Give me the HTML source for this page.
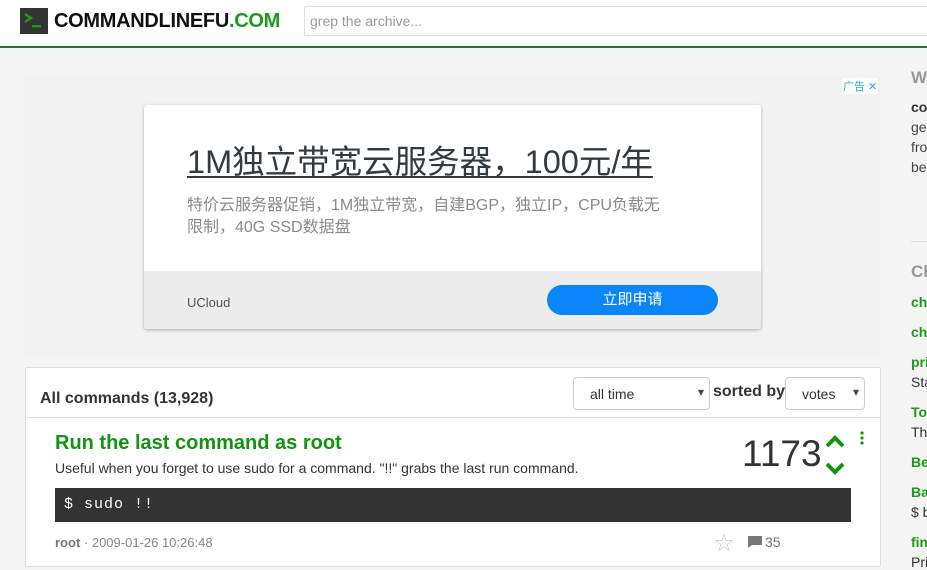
<!DOCTYPE html>
<html><head><meta charset="utf-8">
<style>
*{margin:0;padding:0;box-sizing:border-box}
body{width:927px;height:565px;overflow:hidden;background:#f4f4f4;font-family:"Liberation Sans","Noto Sans CJK SC",sans-serif;position:relative}
.hdr{position:absolute;left:0;top:0;width:927px;height:48px;background:#fff;border-bottom:2px solid #1e7e1e}
.logo{position:absolute;left:20px;top:8px;width:28px;height:26px;background:#333}
.brand{position:absolute;left:54px;top:10px;font-size:20px;font-weight:bold;color:#111;letter-spacing:-0.3px}
.brand span{color:#1c9a1c}
.search{position:absolute;left:304px;top:6px;width:640px;height:30px;border:1px solid #ddd;border-radius:2px;font-size:14px;color:#999;padding:6px 5px}
.ad{position:absolute;left:25px;top:75px;width:855px;height:282px;background:#f2f2f2}
.adtag{position:absolute;left:842px;top:78px;font-size:11px;color:#1eb0e0;background:#fff;padding:0 1px}
.card{position:absolute;left:144px;top:105px;width:617px;height:224px;background:#fff;border-radius:3px;box-shadow:0 1px 3px rgba(0,0,0,.3);overflow:hidden}
.card h1{position:absolute;left:43px;top:31px;font-size:32.5px;font-weight:normal;color:#333b40;text-decoration:underline;text-decoration-thickness:2px;text-underline-offset:3px;white-space:nowrap}
.card p{position:absolute;left:43px;top:90px;width:500px;font-size:16px;line-height:22px;color:#8a8a8a}
.foot{position:absolute;left:0;top:166px;width:617px;height:58px;background:#ececec}
.foot .u{position:absolute;left:43px;top:24px;font-size:13px;color:#555}
.btn{position:absolute;left:403px;top:14px;width:171px;height:30px;border-radius:15px;background:#0a85fa;color:#fff;font-size:15px;text-align:center;line-height:30px}
.main{position:absolute;left:25px;top:367px;width:856px;height:200px;background:#fff;border:1px solid #ddd;border-radius:2px}
.mh{position:absolute;left:0;top:0;width:854px;height:50px;border-bottom:1px solid #ddd}
.mh .t{position:absolute;left:14px;top:22px;font-size:16px;font-weight:bold;color:#333}
.sel{position:absolute;top:9px;height:33px;border:1px solid #ccc;border-radius:4px;font-size:14px;color:#333;padding:8px 16px}
.sel:after{content:"▾";position:absolute;right:5px;top:7px;font-size:12px;color:#444}
.sb{position:absolute;left:687px;top:15px;font-size:16px;font-weight:bold;color:#333}
.ct{position:absolute;left:29px;top:64px;font-size:20px;font-weight:bold;color:#109510}
.cd{position:absolute;left:29px;top:92px;font-size:14px;color:#333}
.code{position:absolute;left:29px;top:120px;width:796px;height:34px;background:#333;color:#fff;font-family:"Liberation Mono",monospace;font-size:15px;padding:8px 9px;letter-spacing:1px}
.meta{position:absolute;left:29px;top:167px;font-size:13px;color:#888}
.meta b{color:#777}
.votes{position:absolute;left:716px;top:65px;font-size:37px;color:#333}
.side{position:absolute;left:911px;font-size:14px;color:#333;white-space:nowrap}
.g{color:#1c9a1c;font-weight:bold}
.h{color:#999;font-weight:bold;font-size:17px}
</style></head><body>
<div class="hdr">
<div class="logo"><svg width="28" height="26"><path d="M5 6 L11 10 L5 14" stroke="#1c9a1c" stroke-width="2.5" fill="none"/><rect x="12" y="17" width="9" height="2.5" fill="#1c9a1c"/></svg></div>
<div class="brand">COMMANDLINEFU<span>.COM</span></div>
<div class="search">grep the archive...</div>
</div>
<div class="ad"></div>
<div class="adtag">广告 ✕</div>
<div class="card">
<h1>1M独立带宽云服务器，100元/年</h1>
<p>特价云服务器促销，1M独立带宽，自建BGP，独立IP，CPU负载无<br>限制，40G SSD数据盘</p>
<div class="foot"><div class="u">UCloud</div><div class="btn">立即申请</div></div>
</div>
<div class="main">
<div class="mh"><div class="t">All commands (13,928)</div>
<div class="sel" style="left:547px;width:137px">all time</div>
<div class="sb">sorted by</div>
<div class="sel" style="left:759px;width:80px">votes</div></div>
<div class="ct">Run the last command as root</div>
<div class="cd">Useful when you forget to use sudo for a command. "!!" grabs the last run command.</div>
<div class="code">$ sudo !!</div>
<div class="meta"><b>root</b> · 2009-01-26 10:26:48</div>
<div class="votes">1173</div>
<svg style="position:absolute;left:798px;top:66px" width="22" height="44"><path d="M3 12 L11 4 L19 12" stroke="#109510" stroke-width="4" fill="none"/><path d="M3 30 L11 38 L19 30" stroke="#109510" stroke-width="4" fill="none"/></svg>
<svg style="position:absolute;left:834px;top:63px" width="4" height="14"><circle cx="2" cy="2" r="1.6" fill="#109510"/><circle cx="2" cy="7" r="1.6" fill="#109510"/><circle cx="2" cy="12" r="1.6" fill="#109510"/></svg>
<div style="position:absolute;left:688px;top:159px;font-size:20px;color:#ccc">☆</div>
<svg style="position:absolute;left:721px;top:167px" width="16" height="14"><path d="M1 1 H15 V10 H5 L1 13 Z" fill="#777"/></svg>
<div style="position:absolute;left:739px;top:166px;font-size:14px;color:#777">35</div>
</div>
<div class="side h" style="top:68px">W</div>
<div class="side" style="top:99px"><b>co</b></div>
<div class="side" style="top:119px;color:#444">ge</div>
<div class="side" style="top:139px;color:#444">fro</div>
<div class="side" style="top:159px;color:#444">be</div>
<div style="position:absolute;left:911px;top:241px;width:16px;height:1px;background:#ddd"></div>
<div class="side h" style="top:262px">Ch</div>
<div class="side g" style="top:294px">ch</div>
<div class="side g" style="top:324px">ch</div>
<div class="side g" style="top:354px">pri</div>
<div class="side" style="top:374px">Sta</div>
<div class="side g" style="top:404px">To</div>
<div class="side" style="top:424px">Th</div>
<div class="side g" style="top:454px">Be</div>
<div class="side g" style="top:484px">Ba</div>
<div class="side" style="top:504px">$ b</div>
<div class="side g" style="top:534px">fin</div>
<div class="side" style="top:554px">Pri</div>
</body></html>
